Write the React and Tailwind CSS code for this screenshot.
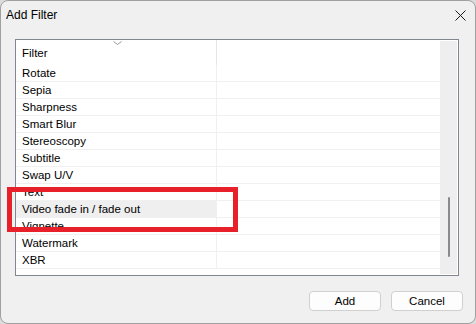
import React from "react";

const rows = [
  "Rotate",
  "Sepia",
  "Sharpness",
  "Smart Blur",
  "Stereoscopy",
  "Subtitle",
  "Swap U/V",
  "Text",
  "Video fade in / fade out",
  "Vignette",
  "Watermark",
  "XBR",
];

export default function App() {
  return (
    <div
      className="w-[476px] h-[324px] bg-[#dcdcdc] overflow-hidden relative"
      style={{ fontFamily: '"Liberation Sans", Arial, sans-serif' }}
    >
      <div className="w-[476px] h-[324px] bg-[#f0f0f0] border border-[#a0a0a0] rounded-[8px] flex flex-col overflow-hidden text-black">
        {/* title bar */}
        <div className="h-[28px] flex items-center justify-between pl-[5px] pr-[9px] shrink-0">
          <span className="text-[12px] leading-none">Add Filter</span>
          <svg width="11" height="11" viewBox="0 0 11 11">
            <path d="M0.5 0.5 L10.5 10.5 M10.5 0.5 L0.5 10.5" stroke="#1a1a1a" strokeWidth="1" fill="none" />
          </svg>
        </div>
        {/* list box */}
        <div className="mt-[10px] ml-[14px] w-[444px] h-[237px] border border-[#82878f] bg-white flex shrink-0">
          <div className="flex-1 flex flex-col overflow-hidden">
            {/* header */}
            <div className="h-[25px] flex shrink-0 relative">
              <div className="w-[201px] flex items-center pl-[6px] pt-[3px] text-[11.5px] leading-none border-r border-[#e5e5e5]">
                Filter
              </div>
              <svg width="9" height="4" viewBox="0 0 9 4" className="absolute left-[97px] top-[1px]">
                <path d="M0.5 0.5 L4.5 3.5 L8.5 0.5" stroke="#9a9a9a" strokeWidth="1" fill="none" />
              </svg>
            </div>
            {rows.map((r) => (
              <div
                key={r}
                className="h-[17px] flex shrink-0 border-b border-[#f0f0f0]"
              >
                <div
                  className={`w-[201px] flex items-center pl-[6px] pt-[2px] text-[11.5px] leading-none border-r border-[#f0f0f0] ${
                    r === "Video fade in / fade out" ? "bg-[#efefef]" : ""
                  }`}
                >
                  {r}
                </div>
              </div>
            ))}
          </div>
          {/* scrollbar */}
          <div className="w-[17px] bg-[#eeeeee] my-[1px] mr-[1px] relative">
            <div className="absolute left-[8px] top-[156px] w-[2px] h-[60px] bg-[#8a8a8a] rounded-full" />
          </div>
        </div>
        {/* buttons */}
        <div className="flex justify-end gap-[10px] pr-[12px] mt-[15px]">
          <button className="w-[72px] h-[20px] rounded-[4px] border border-[#d0d0d0] bg-[#fdfdfd] text-[11.5px] leading-none pt-[1px] flex items-center justify-center">
            Add
          </button>
          <button className="w-[72px] h-[20px] rounded-[4px] border border-[#d0d0d0] bg-[#fdfdfd] text-[11.5px] leading-none pt-[1px] flex items-center justify-center">
            Cancel
          </button>
        </div>
      </div>
      {/* red annotation rectangle */}
      <div className="absolute left-[7px] top-[187px] w-[231px] h-[45px] border-[5px] border-[#e8202a]" />
    </div>
  );
}
